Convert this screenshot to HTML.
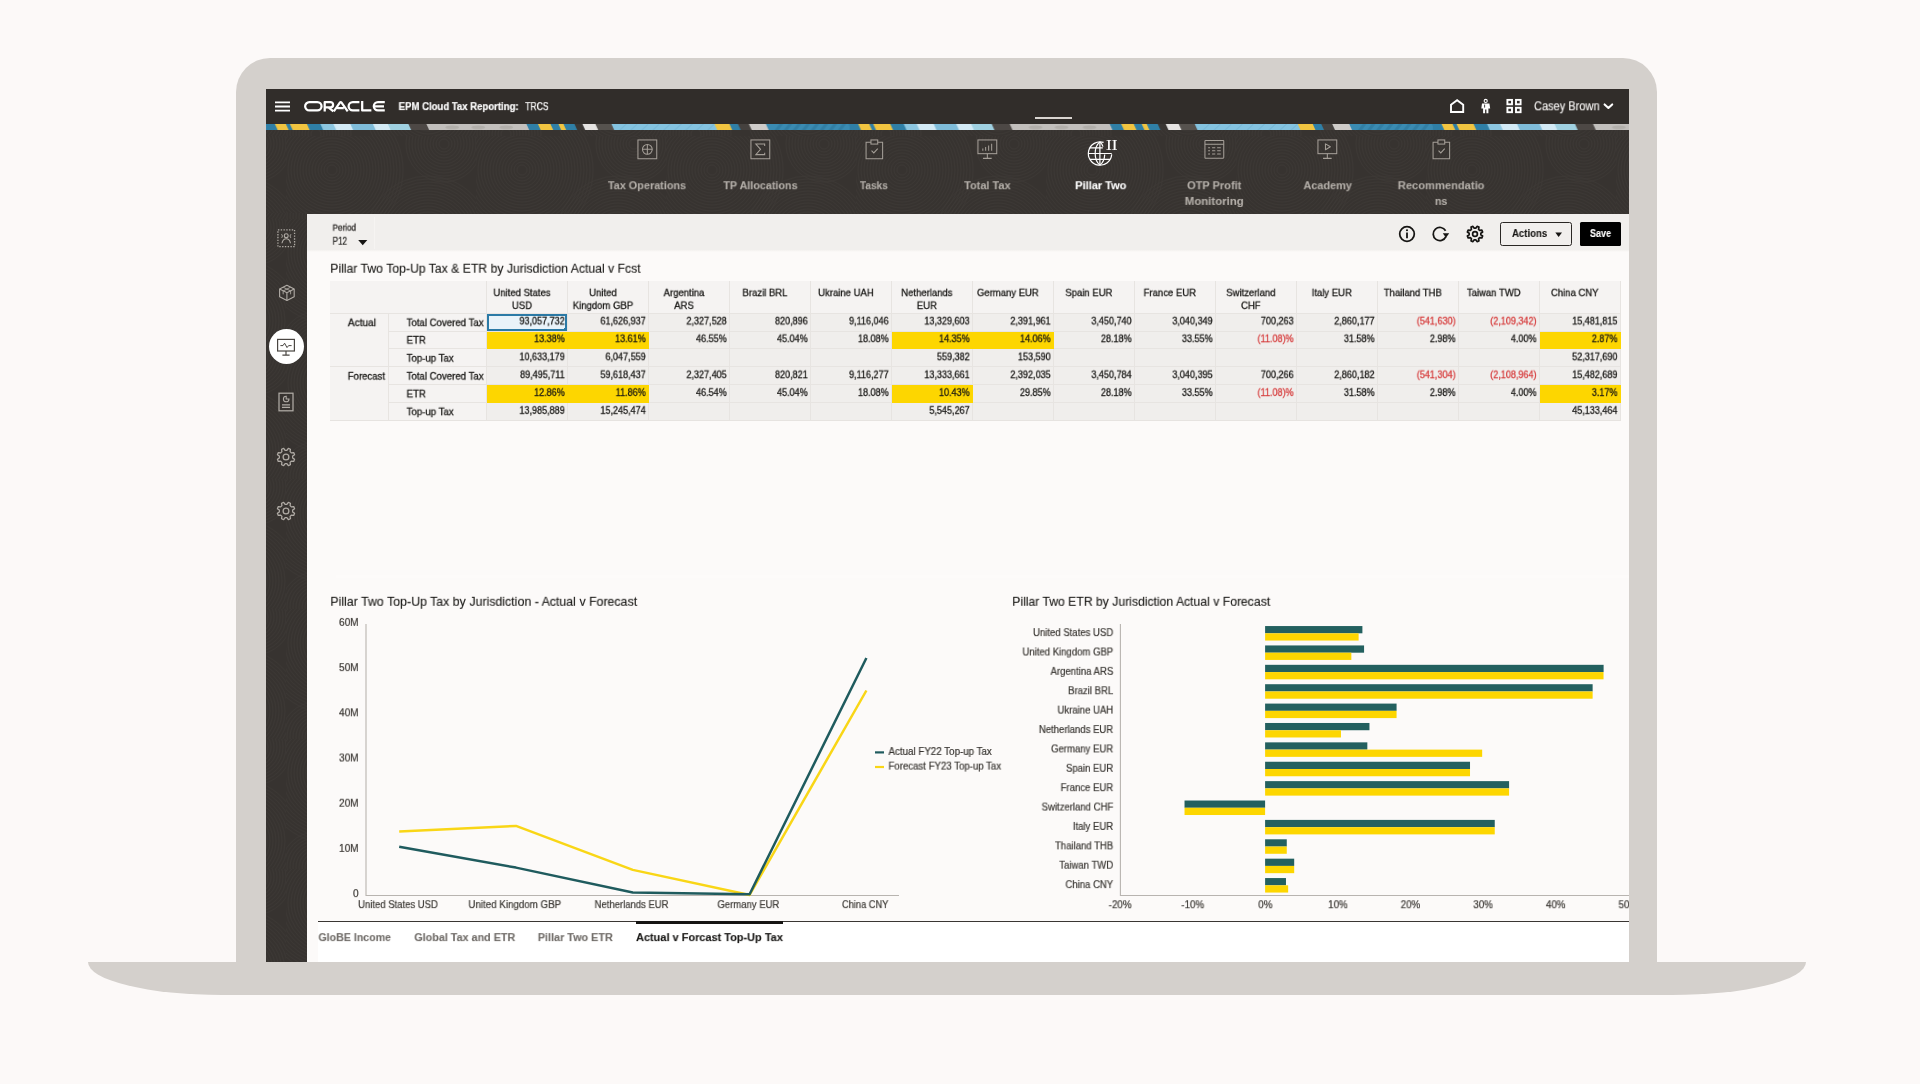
<!DOCTYPE html>
<html lang="en"><head><meta charset="utf-8"><title>EPM Cloud Tax Reporting</title>
<style>
html,body{margin:0;padding:0;}
body{width:1920px;height:1084px;overflow:hidden;background:#fcf9f8;font-family:"Liberation Sans", sans-serif;position:relative;}
.t{position:absolute;white-space:pre;overflow:visible;will-change:transform;}
.r{position:absolute;}
svg{position:absolute;overflow:visible;}
</style></head><body>
<div class="r" style="left:236px;top:58px;width:1421px;height:920px;background:#d4d0cc;border-radius:34px 34px 0 0;"></div><div class="r" style="left:88px;top:962px;width:1718px;height:33px;background:#d4d0cc;border-radius:0 0 134px 134px / 0 0 33px 33px;"></div><div class="r" id="screen" style="left:266px;top:89px;width:1363px;height:873px;overflow:hidden;background:#fcfaf9;"><div class="r" style="left:-266px;top:-89px;width:1920px;height:1084px;"><div class="r" style="left:266px;top:89px;width:1363px;height:35px;background:#312d2a;"></div><svg style="left:274.8px;top:101px" width="15" height="11.4" viewBox="0 0 15 11.4"><path d="M0 1.45H15M0 5.55H15M0 9.65H15" stroke="#fff" stroke-width="1.85" fill="none"/></svg><svg style="left:303.6px;top:101.3px" width="81" height="10.6" viewBox="0 0 81 10.6" fill="none" stroke="#fff" stroke-width="2.25" stroke-linejoin="round">
<rect x="1.12" y="1.12" width="16.4" height="8.36" rx="4.18"/>
<path d="M20.7 10.6V1.12H26.5a2.6 2.6 0 0 1 0 5.2H21.4M24.4 6.4L29.4 10.3"/>
<path d="M29.8 10.3L36 1.4a0.9 0.9 0 0 1 1.4 0L43.7 10.3M33.4 7.2H39.8" stroke-linejoin="miter"/>
<path d="M55.4 1.12H48.8a4.18 4.18 0 0 0 0 8.36H55.4"/>
<path d="M58.2 0V9.48H67.4"/>
<path d="M80.8 1.12H74a4.18 4.18 0 0 0 0 8.36H80.8M70.8 5.3H80"/>
</svg><div class="t" style="left:398px;top:98px;width:137.40px;height:16px;line-height:16px;font-size:10.8px;font-weight:700;color:#ffffff;text-align:left;-webkit-text-stroke:0.2px #ffffff;transform:translate(0.60px,0.10px) scale(0.8863,1.000);transform-origin:0 50%;">EPM Cloud Tax Reporting:</div><div class="t" style="left:525px;top:98px;width:31.40px;height:16px;line-height:16px;font-size:10.8px;font-weight:400;color:#ffffff;text-align:left;-webkit-text-stroke:0.25px #ffffff;transform:translate(0.20px,0.10px) scale(0.7925,1.000);transform-origin:0 50%;">TRCS</div><svg style="left:1449px;top:98px" width="17" height="17" viewBox="0 0 17 17" fill="none" stroke="#fff" stroke-width="1.9" stroke-linejoin="miter">
<path d="M2 6.8L8.1 2.3 14.2 6.8V14H2Z"/></svg><svg style="left:1479px;top:98px" width="14" height="17" viewBox="0 0 14 17" fill="#fff" stroke="none">
<circle cx="6.7" cy="2.9" r="1.55" fill="none" stroke="#fff" stroke-width="1.1"/>
<path d="M3 5.4H10.4L11.2 10.6H9.4V15.3H7.4V11.4H6.1V15.3H4.1V10.6H2.3Z"/>
<path d="M5.6 6.6V9.6" stroke="#312d2a" stroke-width="0.9"/>
</svg><svg style="left:1506px;top:99px" width="16" height="15" viewBox="0 0 16 15" fill="none" stroke="#fff" stroke-width="1.9">
<rect x="1.4" y="0.9" width="4.6" height="4.4"/><rect x="10" y="0.9" width="4.6" height="4.4"/>
<rect x="1.4" y="8.8" width="4.6" height="4.4"/><rect x="10" y="8.8" width="4.6" height="4.4"/></svg><div class="t" style="left:1534px;top:97px;width:73.36px;height:18px;line-height:18px;font-size:12px;font-weight:400;color:#fbf9f8;text-align:left;-webkit-text-stroke:0.1px #fbf9f8;transform:translate(0.00px,0.30px) scale(0.9193,1.000);transform-origin:0 50%;">Casey Brown</div><svg style="left:1603.2px;top:102px" width="11" height="9" viewBox="0 0 11 9" fill="none" stroke="#fff" stroke-width="2.1" stroke-linecap="round" stroke-linejoin="round"><path d="M1.6 2.4L5.4 5.9 9.2 2.4"/></svg><div class="r" style="left:1034.5px;top:117px;width:37.5px;height:2.4000000000000057px;background:#d9d5d1;"></div><svg style="left:266px;top:123.6px" width="1363" height="6.6" viewBox="0 0 1363 6.8" preserveAspectRatio="none"><defs><pattern id="bn" x="0.25" y="0" width="583.3" height="6.8" patternUnits="userSpaceOnUse"><rect x="0" y="0" width="583.3" height="6.8" fill="#2f7fa6"/><polygon points="-1.8,0 9.3,0 12.3,6.8 1.2,6.8" fill="#2f7fa6"/><polygon points="8.7,0 20.3,0 23.3,6.8 11.7,6.8" fill="#f1c440"/><polygon points="19.7,0 24.3,0 27.3,6.8 22.7,6.8" fill="#2f7fa6"/><polygon points="23.7,0 41.3,0 44.3,6.8 26.7,6.8" fill="#f1c440"/><polygon points="40.7,0 54.8,0 57.8,6.8 43.7,6.8" fill="#2f7fa6"/><polygon points="54.2,0 67.8,0 70.8,6.8 57.2,6.8" fill="#8cc6e0"/><polygon points="67.2,0 84.8,0 87.8,6.8 70.2,6.8" fill="#d3eaf5"/><polygon points="84.2,0 107.3,0 110.3,6.8 87.2,6.8" fill="#7fbcd9"/><polygon points="106.7,0 122.3,0 125.3,6.8 109.7,6.8" fill="#d3eaf5"/><polygon points="121.7,0 142.8,0 145.8,6.8 124.7,6.8" fill="#9fd0e0"/><polygon points="142.2,0 160.8,0 163.8,6.8 145.2,6.8" fill="#4d4845"/><polygon points="160.2,0 260.8,0 263.8,6.8 163.2,6.8" fill="#c2bfbc"/><polygon points="260.2,0 272.3,0 275.3,6.8 263.2,6.8" fill="#2f7fa6"/><polygon points="271.7,0 284.8,0 287.8,6.8 274.7,6.8" fill="#f1c440"/><polygon points="284.2,0 292.8,0 295.8,6.8 287.2,6.8" fill="#2f7fa6"/><polygon points="292.2,0 297.8,0 300.8,6.8 295.2,6.8" fill="#f1c440"/><polygon points="297.2,0 308.8,0 311.8,6.8 300.2,6.8" fill="#2f7fa6"/><polygon points="308.2,0 316.8,0 319.8,6.8 311.2,6.8" fill="#3a3633"/><polygon points="316.2,0 329.8,0 332.8,6.8 319.2,6.8" fill="#e6e4e2"/><polygon points="329.2,0 345.8,0 348.8,6.8 332.2,6.8" fill="#56524e"/><polygon points="345.2,0 448.8,0 451.8,6.8 348.2,6.8" fill="#84c3e0"/><polygon points="448.2,0 463.8,0 466.8,6.8 451.2,6.8" fill="#f1c440"/><polygon points="463.2,0 472.3,0 475.3,6.8 466.2,6.8" fill="#2f7fa6"/><polygon points="471.7,0 483.3,0 486.3,6.8 474.7,6.8" fill="#45413e"/><polygon points="482.7,0 500.3,0 503.3,6.8 485.7,6.8" fill="#cfccc9"/><polygon points="499.7,0 582.1,0 585.1,6.8 502.7,6.8" fill="#3a8bb2"/><polygon points="513,0 517,0 512,6.8 508,6.8" fill="#2d7a9f" opacity="0.7"/><polygon points="522,0 526,0 521,6.8 517,6.8" fill="#2d7a9f" opacity="0.7"/><polygon points="531,0 535,0 530,6.8 526,6.8" fill="#2d7a9f" opacity="0.7"/><polygon points="540,0 544,0 539,6.8 535,6.8" fill="#2d7a9f" opacity="0.7"/><polygon points="549,0 553,0 548,6.8 544,6.8" fill="#2d7a9f" opacity="0.7"/><polygon points="558,0 562,0 557,6.8 553,6.8" fill="#2d7a9f" opacity="0.7"/><polygon points="567,0 571,0 566,6.8 562,6.8" fill="#2d7a9f" opacity="0.7"/><polygon points="576,0 580,0 575,6.8 571,6.8" fill="#2d7a9f" opacity="0.7"/><path d="M360 0L353 6.8" stroke="#5fa5c6" stroke-width="0.8" opacity="0.7"/><path d="M371 0L364 6.8" stroke="#5fa5c6" stroke-width="0.8" opacity="0.7"/><path d="M382 0L375 6.8" stroke="#5fa5c6" stroke-width="0.8" opacity="0.7"/><path d="M393 0L386 6.8" stroke="#5fa5c6" stroke-width="0.8" opacity="0.7"/><path d="M404 0L397 6.8" stroke="#5fa5c6" stroke-width="0.8" opacity="0.7"/><path d="M415 0L408 6.8" stroke="#5fa5c6" stroke-width="0.8" opacity="0.7"/><path d="M426 0L419 6.8" stroke="#5fa5c6" stroke-width="0.8" opacity="0.7"/><path d="M437 0L430 6.8" stroke="#5fa5c6" stroke-width="0.8" opacity="0.7"/><path d="M448 0L441 6.8" stroke="#5fa5c6" stroke-width="0.8" opacity="0.7"/><ellipse cx="186" cy="3.4" rx="7" ry="2" fill="#a5a19d" opacity="0.55"/><ellipse cx="212" cy="3.4" rx="7" ry="2" fill="#a5a19d" opacity="0.55"/><ellipse cx="240" cy="3.4" rx="7" ry="2" fill="#a5a19d" opacity="0.55"/></pattern></defs><rect width="1363" height="6.8" fill="url(#bn)"/></svg><svg style="left:266px;top:130px" width="1363" height="84"><defs><pattern id="tx" width="190" height="130" patternUnits="userSpaceOnUse" patternTransform="translate(20 6)">
<g fill="none" stroke="#4a4541" stroke-width="0.75" opacity="0.34"><circle cx="46" cy="34" r="5"/><circle cx="46" cy="34" r="8"/><circle cx="46" cy="34" r="11"/><circle cx="46" cy="34" r="14"/><circle cx="46" cy="34" r="17"/><circle cx="46" cy="34" r="20"/><circle cx="46" cy="34" r="23"/><circle cx="46" cy="34" r="26"/><circle cx="46" cy="34" r="29"/><circle cx="46" cy="34" r="32"/><circle cx="46" cy="34" r="35"/><circle cx="46" cy="34" r="38"/><circle cx="46" cy="34" r="41"/><circle cx="46" cy="34" r="44"/><circle cx="46" cy="34" r="47"/><circle cx="46" cy="34" r="50"/><circle cx="46" cy="34" r="53"/><circle cx="46" cy="34" r="56"/><circle cx="46" cy="34" r="59"/><circle cx="46" cy="34" r="62"/><circle cx="46" cy="34" r="65"/><circle cx="46" cy="34" r="68"/><circle cx="46" cy="34" r="71"/><circle cx="142" cy="102" r="5"/><circle cx="142" cy="102" r="8"/><circle cx="142" cy="102" r="11"/><circle cx="142" cy="102" r="14"/><circle cx="142" cy="102" r="17"/><circle cx="142" cy="102" r="20"/><circle cx="142" cy="102" r="23"/><circle cx="142" cy="102" r="26"/><circle cx="142" cy="102" r="29"/><circle cx="142" cy="102" r="32"/><circle cx="142" cy="102" r="35"/><circle cx="142" cy="102" r="38"/><circle cx="142" cy="102" r="41"/><circle cx="142" cy="102" r="44"/><circle cx="142" cy="102" r="47"/><circle cx="142" cy="102" r="50"/><circle cx="142" cy="102" r="53"/><circle cx="142" cy="102" r="56"/><circle cx="142" cy="102" r="59"/><circle cx="142" cy="102" r="62"/><circle cx="158" cy="8" r="5"/><circle cx="158" cy="8" r="8"/><circle cx="158" cy="8" r="11"/><circle cx="158" cy="8" r="14"/><circle cx="158" cy="8" r="17"/><circle cx="158" cy="8" r="20"/><circle cx="158" cy="8" r="23"/><circle cx="158" cy="8" r="26"/><circle cx="158" cy="8" r="29"/><circle cx="158" cy="8" r="32"/><circle cx="158" cy="8" r="35"/><circle cx="158" cy="8" r="38"/><circle cx="30" cy="128" r="5"/><circle cx="30" cy="128" r="8"/><circle cx="30" cy="128" r="11"/><circle cx="30" cy="128" r="14"/><circle cx="30" cy="128" r="17"/><circle cx="30" cy="128" r="20"/><circle cx="30" cy="128" r="23"/><circle cx="30" cy="128" r="26"/><circle cx="30" cy="128" r="29"/><circle cx="30" cy="128" r="32"/><circle cx="30" cy="128" r="35"/></g></pattern></defs><rect width="1363" height="84" fill="#373330"/><rect width="1363" height="84" fill="url(#tx)"/></svg><svg style="left:266px;top:213px" width="41" height="749"><rect width="41" height="749" fill="#373330"/><rect width="41" height="749" fill="url(#tx)"/></svg><div class="t" style="left:604px;top:177px;width:85.59px;height:16px;line-height:16px;font-size:11.6px;font-weight:700;color:#b3aea8;text-align:center;-webkit-text-stroke:0.1px #b3aea8;transform:translate(0.21px,0.20px) scale(0.9362,1.000);transform-origin:50% 50%;">Tax Operations</div><div class="t" style="left:719px;top:177px;width:81.93px;height:16px;line-height:16px;font-size:11.6px;font-weight:700;color:#b3aea8;text-align:center;-webkit-text-stroke:0.1px #b3aea8;transform:translate(0.49px,0.20px) scale(0.9290,1.000);transform-origin:50% 50%;">TP Allocations</div><div class="t" style="left:856px;top:177px;width:34.03px;height:16px;line-height:16px;font-size:11.6px;font-weight:700;color:#b3aea8;text-align:center;-webkit-text-stroke:0.1px #b3aea8;transform:translate(0.88px,0.20px) scale(0.8742,1.000);transform-origin:50% 50%;">Tasks</div><div class="t" style="left:961px;top:177px;width:51.20px;height:16px;line-height:16px;font-size:11.6px;font-weight:700;color:#b3aea8;text-align:center;-webkit-text-stroke:0.1px #b3aea8;transform:translate(0.75px,0.20px) scale(0.9452,1.000);transform-origin:50% 50%;">Total Tax</div><div class="t" style="left:1072px;top:177px;width:55.93px;height:16px;line-height:16px;font-size:11.6px;font-weight:700;color:#ffffff;text-align:center;-webkit-text-stroke:0.1px #ffffff;transform:translate(0.84px,0.20px) scale(0.9503,1.000);transform-origin:50% 50%;">Pillar Two</div><div class="t" style="left:1300px;top:177px;width:53.58px;height:16px;line-height:16px;font-size:11.6px;font-weight:700;color:#b3aea8;text-align:center;-webkit-text-stroke:0.1px #b3aea8;transform:translate(0.91px,0.20px) scale(0.9402,1.000);transform-origin:50% 50%;">Academy</div><div class="t" style="left:1184px;top:177px;width:59.15px;height:16px;line-height:16px;font-size:11.6px;font-weight:700;color:#b3aea8;text-align:center;-webkit-text-stroke:0.1px #b3aea8;transform:translate(0.68px,0.20px) scale(0.9493,1.000);transform-origin:50% 50%;">OTP Profit</div><div class="t" style="left:1183px;top:192px;width:61.92px;height:16px;line-height:16px;font-size:11.6px;font-weight:700;color:#b3aea8;text-align:center;-webkit-text-stroke:0.1px #b3aea8;transform:translate(0.29px,0.90px) scale(0.9847,1.000);transform-origin:50% 50%;">Monitoring</div><div class="t" style="left:1395px;top:177px;width:92.24px;height:16px;line-height:16px;font-size:11.6px;font-weight:700;color:#b3aea8;text-align:center;-webkit-text-stroke:0.1px #b3aea8;transform:translate(0.03px,0.20px) scale(0.9613,1.000);transform-origin:50% 50%;">Recommendatio</div><div class="t" style="left:1433px;top:192px;width:15.54px;height:16px;line-height:16px;font-size:11.6px;font-weight:700;color:#b3aea8;text-align:center;-webkit-text-stroke:0.1px #b3aea8;transform:translate(0.38px,0.90px) scale(0.9234,1.000);transform-origin:50% 50%;">ns</div><svg style="left:636.65px;top:139.15px" width="20.70" height="20.70" viewBox="0 0 22 22" fill="none" stroke="#a59f98" stroke-width="1.1"><rect x="1" y="1" width="20" height="20"/><circle cx="11" cy="11" r="5.2"/><path d="M11 5.8V16.2M5.8 11H16.2"/></svg><svg style="left:750.10px;top:139.15px" width="20.70" height="20.70" viewBox="0 0 22 22" fill="none" stroke="#a59f98" stroke-width="1.1"><rect x="1" y="1" width="20" height="20"/><path d="M15.6 7.4V5.4H6.2L11.2 11 6.2 16.6H15.6V14.6" stroke-linejoin="miter"/></svg><svg style="left:863.55px;top:139.15px" width="20.70" height="20.70" viewBox="0 0 22 22" fill="none" stroke="#a59f98" stroke-width="1.1"><path d="M7.4 3.4H2.2V21H19.8V3.4H14.6"/><rect x="7.4" y="1" width="7.2" height="4.4"/><path d="M8 12.4L10.4 14.8 14.6 10.2"/></svg><svg style="left:977.00px;top:139.15px" width="20.70" height="20.70" viewBox="0 0 22 22" fill="none" stroke="#a59f98" stroke-width="1.1"><rect x="1" y="1" width="20" height="14.6"/><path d="M11 15.6V20.4M6.4 20.6H15.6"/><path d="M6.2 12.4V10.2M9.2 12.4V8.6M12.4 12.4V7M15.6 12.4V5"/></svg><svg style="left:1087.40px;top:139.4px" width="31" height="27" viewBox="0 0 31 27" fill="none" stroke="#fff" stroke-width="1.2">
<path d="M16.6 3.4A11.7 11.7 0 1 0 24.7 15.4"/>
<path d="M12.9 2.9C6.6 8 6.6 21 12.9 26.1M12.9 2.9C14.4 4.2 15.4 5.8 16 7.6M12.9 26.1C16 23.6 17.6 19.6 17.7 15.4"/>
<path d="M12.9 2.9V26.1M1.2 14.5H24.7M3 8.8H15.8M3 20.3H23.2"/>
</svg><div class="t" style="left:1106px;top:134px;width:20.48px;height:21px;line-height:21px;font-size:15.4px;font-weight:400;color:#fff;text-align:left;font-family:'Liberation Serif', serif;-webkit-text-stroke:0.1px #fff;transform:translate(0.00px,0.20px) scale(1.1200,1.000);transform-origin:0 50%;">II</div><svg style="left:1203.90px;top:139.15px" width="20.70" height="20.70" viewBox="0 0 22 22" fill="none" stroke="#a59f98" stroke-width="1.1"><rect x="1" y="1.6" width="20" height="18.8" rx="0.6"/><path d="M1 5.6H21"/><path d="M4.4 9.2H6.4M8.6 9.2H12M14 9.2H17.8M4.4 12.6H6.4M8.6 12.6H12M14 12.6H17.8M4.4 16H6.4M8.6 16H12M14 16H17.8" stroke-width="1.1"/></svg><svg style="left:1317.35px;top:139.15px" width="20.70" height="20.70" viewBox="0 0 22 22" fill="none" stroke="#a59f98" stroke-width="1.1"><rect x="1" y="1" width="20" height="14.6"/><path d="M11 15.6V20.4M6.4 20.6H15.6"/><path d="M9 5.2V11.4L14.2 8.3Z" stroke-linejoin="round"/></svg><svg style="left:1430.80px;top:139.15px" width="20.70" height="20.70" viewBox="0 0 22 22" fill="none" stroke="#a59f98" stroke-width="1.1"><path d="M7.4 3.4H2.2V21H19.8V3.4H14.6"/><rect x="7.4" y="1" width="7.2" height="4.4"/><path d="M8 12.4L10.4 14.8 14.6 10.2"/></svg><svg style="left:277.15px;top:229.35px" width="18.50" height="18.50" viewBox="0 0 20 20" fill="none" stroke="#b0aba5" stroke-width="1.2"><rect x="1" y="1" width="18" height="18" stroke-dasharray="1.5 1.5" stroke-width="1.4"/><circle cx="10" cy="7.2" r="2.1"/><path d="M5.4 15.4C6.2 11.6 8 10.6 10 10.6S13.8 11.6 14.6 15.4"/><path d="M4.8 5.6C6 6.6 6.2 8.4 5 9.6M15.2 5.6C14 6.6 13.8 8.4 15 9.6" stroke-width="1"/></svg><svg style="left:277.50px;top:284.10px" width="17.80" height="17.80" viewBox="0 0 20 20" fill="none" stroke="#b0aba5" stroke-width="1.25"><path d="M10 1.4L18.2 5.6V14.4L10 18.6 1.8 14.4V5.6Z" stroke-linejoin="round"/><path d="M1.8 5.6L10 9.8 18.2 5.6M10 9.8V18.6"/><path d="M5.8 3.6L14.2 7.8V11.6M14.2 3.6L5.8 7.8V11.6" stroke-width="1"/></svg><div class="r" style="left:268.6px;top:329px;width:35.4px;height:35.4px;border-radius:50%;background:#fff;"></div><svg style="left:276.40px;top:336.70px" width="20.00" height="20.00" viewBox="0 0 20 20" fill="none" stroke="#4a4642" stroke-width="1.2"><rect x="1.6" y="2.4" width="16.8" height="11.6"/><path d="M10 14V18M6.4 18.2H13.6"/><path d="M4.4 8.6H7L8.6 6.2 11 10.6 12.6 8.6H15.6" stroke-width="1"/></svg><svg style="left:276.40px;top:392.30px" width="20.00" height="20.00" viewBox="0 0 20 20" fill="none" stroke="#b0aba5" stroke-width="1.25"><rect x="3" y="1.2" width="14" height="17.6"/><path d="M6 15.4H14M6 12.8H14" stroke-width="1.2"/><path d="M10.2 4.2A2.8 2.8 0 1 0 13 7H10.2Z" stroke-width="1.1"/></svg><svg style="left:276.40px;top:446.70px" width="20.00" height="20.00" viewBox="0 0 20 20" fill="none" stroke="#b0aba5" stroke-width="1.25"><circle cx="10" cy="10" r="2.9"/><path d="M16.64 10.89L18.59 12.31L17.71 14.44L15.32 14.07L14.07 15.32L14.44 17.71L12.31 18.59L10.89 16.64L9.11 16.64L7.69 18.59L5.56 17.71L5.93 15.32L4.68 14.07L2.29 14.44L1.41 12.31L3.36 10.89L3.36 9.11L1.41 7.69L2.29 5.56L4.68 5.93L5.93 4.68L5.56 2.29L7.69 1.41L9.11 3.36L10.89 3.36L12.31 1.41L14.44 2.29L14.07 4.68L15.32 5.93L17.71 5.56L18.59 7.69L16.64 9.11Z" stroke-linejoin="round"/></svg><svg style="left:276.40px;top:500.80px" width="20.00" height="20.00" viewBox="0 0 20 20" fill="none" stroke="#b0aba5" stroke-width="1.25"><circle cx="10" cy="10" r="2.9"/><path d="M16.64 10.89L18.59 12.31L17.71 14.44L15.32 14.07L14.07 15.32L14.44 17.71L12.31 18.59L10.89 16.64L9.11 16.64L7.69 18.59L5.56 17.71L5.93 15.32L4.68 14.07L2.29 14.44L1.41 12.31L3.36 10.89L3.36 9.11L1.41 7.69L2.29 5.56L4.68 5.93L5.93 4.68L5.56 2.29L7.69 1.41L9.11 3.36L10.89 3.36L12.31 1.41L14.44 2.29L14.07 4.68L15.32 5.93L17.71 5.56L18.59 7.69L16.64 9.11Z" stroke-linejoin="round"/></svg><div class="r" style="left:307px;top:214px;width:1322px;height:35.599999999999994px;background:#f1efed;"></div><div class="r" style="left:307px;top:249.6px;width:1322px;height:2px;background:linear-gradient(#f3f1ef,#fcfaf9);"></div><div class="r" style="left:374px;top:217px;width:1px;height:32px;background:#f6f4f2;"></div><div class="t" style="left:332px;top:220px;width:27.15px;height:14px;line-height:14px;font-size:8.7px;font-weight:400;color:#2b2826;text-align:left;-webkit-text-stroke:0.3px #2b2826;transform:translate(0.60px,0.60px) scale(0.9305,1.000);transform-origin:0 50%;">Period</div><div class="t" style="left:332px;top:233px;width:19.79px;height:15px;line-height:15px;font-size:10px;font-weight:400;color:#161513;text-align:left;-webkit-text-stroke:0.15px #161513;transform:translate(0.60px,0.75px) scale(0.8093,1.000);transform-origin:0 50%;">P12</div><svg style="left:358px;top:240.2px" width="10" height="6" viewBox="0 0 10 6"><path d="M0.2 0.1H9.3L4.75 5.2Z" fill="#161513"/></svg><svg style="left:1397.6px;top:224.7px" width="18" height="18" viewBox="0 0 18 18" fill="none" stroke="#161513" stroke-width="1.75">
<circle cx="9" cy="9" r="7.3"/><path d="M9 7.6V13.2" stroke-width="1.8"/><circle cx="9" cy="5.2" r="1.05" fill="#161513" stroke="none"/></svg><svg style="left:1431px;top:224.5px" width="19" height="18" viewBox="0 0 19 18" fill="none" stroke="#161513" stroke-width="1.75">
<path d="M14.9 11.6A6.6 6.6 0 1 1 14.6 5.8"/><path d="M11.8 8.2H18.2L15 12.8Z" fill="#161513" stroke="none"/></svg><svg style="left:1465.7px;top:224.5px" width="18" height="18" viewBox="0 0 18 18" fill="none" stroke="#161513" stroke-width="1.7" stroke-linejoin="round">
<path d="M14.85 9.78L16.63 11.05L15.85 12.94L13.69 12.58L12.58 13.69L12.94 15.85L11.05 16.63L9.78 14.85L8.22 14.85L6.95 16.63L5.06 15.85L5.42 13.69L4.31 12.58L2.15 12.94L1.37 11.05L3.15 9.78L3.15 8.22L1.37 6.95L2.15 5.06L4.31 5.42L5.42 4.31L5.06 2.15L6.95 1.37L8.22 3.15L9.78 3.15L11.05 1.37L12.94 2.15L12.58 4.31L13.69 5.42L15.85 5.06L16.63 6.95L14.85 8.22Z"/><circle cx="9" cy="9" r="2.4"/></svg><div class="r" style="left:1500px;top:221.6px;width:70.4px;height:22.8px;border:1.2px solid #2a2724;border-radius:2.5px;background:#f1efed;"></div><div class="t" style="left:1512px;top:226px;width:39.40px;height:15px;line-height:15px;font-size:10.2px;font-weight:700;color:#161513;text-align:left;-webkit-text-stroke:0.1px #161513;transform:translate(0.00px,0.00px) scale(0.9411,1.000);transform-origin:0 50%;">Actions</div><svg style="left:1554.6px;top:232px" width="8" height="6" viewBox="0 0 8 6"><path d="M0.3 0.4H7L3.65 5Z" fill="#161513"/></svg><div class="r" style="left:1580px;top:222px;width:41.40000000000009px;height:23.599999999999994px;background:#000;border-radius:1.5px;"></div><div class="t" style="left:1590px;top:226px;width:25.82px;height:15px;line-height:15px;font-size:10.2px;font-weight:700;color:#fff;text-align:left;-webkit-text-stroke:0.1px #fff;transform:translate(0.00px,0.00px) scale(0.8815,1.000);transform-origin:0 50%;">Save</div><div class="t" style="left:330px;top:259px;width:322.02px;height:18px;line-height:18px;font-size:12.6px;font-weight:400;color:#161513;text-align:left;-webkit-text-stroke:0.1px #161513;transform:translate(0.20px,0.70px) scale(0.9706,1.000);transform-origin:0 50%;">Pillar Two Top-Up Tax &amp; ETR by Jurisdiction Actual v Fcst</div><div class="r" style="left:329.5px;top:281px;width:1291.2px;height:32px;background:#f5f3f2;"></div><div class="r" style="left:329.5px;top:313px;width:1291.2px;height:107.30000000000001px;background:#f0eeec;"></div><div class="r" style="left:329.5px;top:313px;width:157.39999999999998px;height:107.30000000000001px;background:#f5f3f2;"></div><svg style="left:0;top:0" width="1920" height="1084" shape-rendering="crispEdges"><g stroke="#e7e4e1" stroke-width="1" fill="none"><path d="M329.5 313H1620.7"/><path d="M388.5 331.20H1620.7"/><path d="M388.5 348.70H1620.7"/><path d="M329.5 366.90H1620.7"/><path d="M388.5 384.70H1620.7"/><path d="M388.5 402.50H1620.7"/><path d="M329.5 420.30H1620.7"/><path d="M388.5 313V420.30"/><path d="M486.9 281V420.30"/><path d="M567.88 281V420.30"/><path d="M648.86 281V420.30"/><path d="M729.8399999999999 281V420.30"/><path d="M810.8199999999999 281V420.30"/><path d="M891.8 281V420.30"/><path d="M972.78 281V420.30"/><path d="M1053.76 281V420.30"/><path d="M1134.74 281V420.30"/><path d="M1215.72 281V420.30"/><path d="M1296.7 281V420.30"/><path d="M1377.68 281V420.30"/><path d="M1458.6599999999999 281V420.30"/><path d="M1539.6399999999999 281V420.30"/><path d="M1620.62 281V420.30"/></g></svg><div class="r" style="left:329.5px;top:420.3px;width:1291.2px;height:1.0px;background:#e6e3e0;"></div><div class="t" style="left:489px;top:285px;width:64.44px;height:15px;line-height:15px;font-size:10.4px;font-weight:400;color:#161513;text-align:center;-webkit-text-stroke:0.3px #161513;transform:translate(0.78px,0.38px) scale(0.9150,0.920);transform-origin:50% 50%;">United States</div><div class="t" style="left:510px;top:298px;width:23.96px;height:15px;line-height:15px;font-size:10.4px;font-weight:400;color:#161513;text-align:center;-webkit-text-stroke:0.3px #161513;transform:translate(0.02px,0.18px) scale(0.9150,0.920);transform-origin:50% 50%;">USD</div><div class="t" style="left:586px;top:285px;width:32.06px;height:15px;line-height:15px;font-size:10.4px;font-weight:400;color:#161513;text-align:center;-webkit-text-stroke:0.3px #161513;transform:translate(0.95px,0.38px) scale(0.9150,0.920);transform-origin:50% 50%;">United</div><div class="t" style="left:569px;top:298px;width:67.90px;height:15px;line-height:15px;font-size:10.4px;font-weight:400;color:#161513;text-align:center;-webkit-text-stroke:0.3px #161513;transform:translate(0.03px,0.18px) scale(0.9150,0.920);transform-origin:50% 50%;">Kingdom GBP</div><div class="t" style="left:660px;top:285px;width:46.52px;height:15px;line-height:15px;font-size:10.4px;font-weight:400;color:#161513;text-align:center;-webkit-text-stroke:0.3px #161513;transform:translate(0.70px,0.38px) scale(0.9150,0.920);transform-origin:50% 50%;">Argentina</div><div class="t" style="left:672px;top:298px;width:23.39px;height:15px;line-height:15px;font-size:10.4px;font-weight:400;color:#161513;text-align:center;-webkit-text-stroke:0.3px #161513;transform:translate(0.27px,0.18px) scale(0.9150,0.920);transform-origin:50% 50%;">ARS</div><div class="t" style="left:739px;top:285px;width:51.13px;height:15px;line-height:15px;font-size:10.4px;font-weight:400;color:#161513;text-align:center;-webkit-text-stroke:0.3px #161513;transform:translate(0.38px,0.38px) scale(0.9150,0.920);transform-origin:50% 50%;">Brazil BRL</div><div class="t" style="left:814px;top:285px;width:62.68px;height:15px;line-height:15px;font-size:10.4px;font-weight:400;color:#161513;text-align:center;-webkit-text-stroke:0.3px #161513;transform:translate(0.58px,0.38px) scale(0.9150,0.920);transform-origin:50% 50%;">Ukraine UAH</div><div class="t" style="left:897px;top:285px;width:58.08px;height:15px;line-height:15px;font-size:10.4px;font-weight:400;color:#161513;text-align:center;-webkit-text-stroke:0.3px #161513;transform:translate(0.86px,0.38px) scale(0.9150,0.920);transform-origin:50% 50%;">Netherlands</div><div class="t" style="left:914px;top:298px;width:23.96px;height:15px;line-height:15px;font-size:10.4px;font-weight:400;color:#161513;text-align:center;-webkit-text-stroke:0.3px #161513;transform:translate(0.92px,0.18px) scale(0.9150,0.920);transform-origin:50% 50%;">EUR</div><div class="t" style="left:973px;top:285px;width:69.62px;height:15px;line-height:15px;font-size:10.4px;font-weight:400;color:#161513;text-align:center;-webkit-text-stroke:0.3px #161513;transform:translate(0.07px,0.38px) scale(0.9150,0.920);transform-origin:50% 50%;">Germany EUR</div><div class="t" style="left:1062px;top:285px;width:53.45px;height:15px;line-height:15px;font-size:10.4px;font-weight:400;color:#161513;text-align:center;-webkit-text-stroke:0.3px #161513;transform:translate(0.14px,0.38px) scale(0.9150,0.920);transform-origin:50% 50%;">Spain EUR</div><div class="t" style="left:1140px;top:285px;width:59.22px;height:15px;line-height:15px;font-size:10.4px;font-weight:400;color:#161513;text-align:center;-webkit-text-stroke:0.3px #161513;transform:translate(0.23px,0.38px) scale(0.9150,0.920);transform-origin:50% 50%;">France EUR</div><div class="t" style="left:1222px;top:285px;width:55.76px;height:15px;line-height:15px;font-size:10.4px;font-weight:400;color:#161513;text-align:center;-webkit-text-stroke:0.3px #161513;transform:translate(0.94px,0.38px) scale(0.9150,0.920);transform-origin:50% 50%;">Switzerland</div><div class="t" style="left:1239px;top:298px;width:23.38px;height:15px;line-height:15px;font-size:10.4px;font-weight:400;color:#161513;text-align:center;-webkit-text-stroke:0.3px #161513;transform:translate(0.13px,0.18px) scale(0.9150,0.920);transform-origin:50% 50%;">CHF</div><div class="t" style="left:1308px;top:285px;width:45.92px;height:15px;line-height:15px;font-size:10.4px;font-weight:400;color:#161513;text-align:center;-webkit-text-stroke:0.3px #161513;transform:translate(0.84px,0.38px) scale(0.9150,0.920);transform-origin:50% 50%;">Italy EUR</div><div class="t" style="left:1380px;top:285px;width:65.40px;height:15px;line-height:15px;font-size:10.4px;font-weight:400;color:#161513;text-align:center;-webkit-text-stroke:0.3px #161513;transform:translate(0.08px,0.38px) scale(0.9150,0.920);transform-origin:50% 50%;">Thailand THB</div><div class="t" style="left:1463px;top:285px;width:60.76px;height:15px;line-height:15px;font-size:10.4px;font-weight:400;color:#161513;text-align:center;-webkit-text-stroke:0.3px #161513;transform:translate(0.38px,0.38px) scale(0.9150,0.920);transform-origin:50% 50%;">Taiwan TWD</div><div class="t" style="left:1547px;top:285px;width:54.02px;height:15px;line-height:15px;font-size:10.4px;font-weight:400;color:#161513;text-align:center;-webkit-text-stroke:0.3px #161513;transform:translate(0.73px,0.38px) scale(0.9150,0.920);transform-origin:50% 50%;">China CNY</div><div class="r" style="left:487.4px;top:385.2px;width:80.98000000000002px;height:17.69999999999999px;background:#fdd600;"></div><div class="r" style="left:1540.1399999999999px;top:385.2px;width:80.98000000000002px;height:17.69999999999999px;background:#fdd600;"></div><div class="r" style="left:892.3px;top:331.7px;width:80.98000000000002px;height:17.400000000000034px;background:#fdd600;"></div><div class="r" style="left:568.38px;top:331.7px;width:80.98000000000002px;height:17.400000000000034px;background:#fdd600;"></div><div class="r" style="left:892.3px;top:385.2px;width:80.98000000000002px;height:17.69999999999999px;background:#fdd600;"></div><div class="r" style="left:1540.1399999999999px;top:331.7px;width:80.98000000000002px;height:17.400000000000034px;background:#fdd600;"></div><div class="r" style="left:487.4px;top:331.7px;width:80.98000000000002px;height:17.400000000000034px;background:#fdd600;"></div><div class="r" style="left:973.28px;top:331.7px;width:80.98000000000002px;height:17.400000000000034px;background:#fdd600;"></div><div class="r" style="left:568.38px;top:385.2px;width:80.98000000000002px;height:17.69999999999999px;background:#fdd600;"></div><div class="r" style="left:487.3px;top:313.6px;width:79.6px;height:17.4px;box-sizing:border-box;border:2px solid #2b7aa6;background:#e9f3f9;"></div><div class="r" style="left:564px;top:328px;width:3.3999999999999773px;height:3.3999999999999773px;background:#2b7aa6;"></div><div class="t" style="left:511px;top:313px;width:53.55px;height:15px;line-height:15px;font-size:10.3px;font-weight:400;color:#161513;text-align:right;-webkit-text-stroke:0.3px #161513;transform:translate(0.23px,0.57px) scale(0.8800,0.950);transform-origin:100% 50%;">93,057,732</div><div class="t" style="left:592px;top:313px;width:53.55px;height:15px;line-height:15px;font-size:10.3px;font-weight:400;color:#161513;text-align:right;-webkit-text-stroke:0.3px #161513;transform:translate(0.21px,0.57px) scale(0.8800,0.950);transform-origin:100% 50%;">61,626,937</div><div class="t" style="left:678px;top:313px;width:47.82px;height:15px;line-height:15px;font-size:10.3px;font-weight:400;color:#161513;text-align:right;-webkit-text-stroke:0.3px #161513;transform:translate(0.92px,0.57px) scale(0.8800,0.950);transform-origin:100% 50%;">2,327,528</div><div class="t" style="left:768px;top:313px;width:39.23px;height:15px;line-height:15px;font-size:10.3px;font-weight:400;color:#161513;text-align:right;-webkit-text-stroke:0.3px #161513;transform:translate(0.49px,0.57px) scale(0.8800,0.950);transform-origin:100% 50%;">820,896</div><div class="t" style="left:841px;top:313px;width:47.06px;height:15px;line-height:15px;font-size:10.3px;font-weight:400;color:#161513;text-align:right;-webkit-text-stroke:0.3px #161513;transform:translate(0.64px,0.57px) scale(0.8800,0.950);transform-origin:100% 50%;">9,116,046</div><div class="t" style="left:916px;top:313px;width:53.55px;height:15px;line-height:15px;font-size:10.3px;font-weight:400;color:#161513;text-align:right;-webkit-text-stroke:0.3px #161513;transform:translate(0.13px,0.57px) scale(0.8800,0.950);transform-origin:100% 50%;">13,329,603</div><div class="t" style="left:1002px;top:313px;width:47.82px;height:15px;line-height:15px;font-size:10.3px;font-weight:400;color:#161513;text-align:right;-webkit-text-stroke:0.3px #161513;transform:translate(0.84px,0.57px) scale(0.8800,0.950);transform-origin:100% 50%;">2,391,961</div><div class="t" style="left:1083px;top:313px;width:47.82px;height:15px;line-height:15px;font-size:10.3px;font-weight:400;color:#161513;text-align:right;-webkit-text-stroke:0.3px #161513;transform:translate(0.82px,0.57px) scale(0.8800,0.950);transform-origin:100% 50%;">3,450,740</div><div class="t" style="left:1164px;top:313px;width:47.82px;height:15px;line-height:15px;font-size:10.3px;font-weight:400;color:#161513;text-align:right;-webkit-text-stroke:0.3px #161513;transform:translate(0.80px,0.57px) scale(0.8800,0.950);transform-origin:100% 50%;">3,040,349</div><div class="t" style="left:1254px;top:313px;width:39.23px;height:15px;line-height:15px;font-size:10.3px;font-weight:400;color:#161513;text-align:right;-webkit-text-stroke:0.3px #161513;transform:translate(0.37px,0.57px) scale(0.8800,0.950);transform-origin:100% 50%;">700,263</div><div class="t" style="left:1326px;top:313px;width:47.82px;height:15px;line-height:15px;font-size:10.3px;font-weight:400;color:#161513;text-align:right;-webkit-text-stroke:0.3px #161513;transform:translate(0.76px,0.57px) scale(0.8800,0.950);transform-origin:100% 50%;">2,860,177</div><div class="t" style="left:1409px;top:313px;width:46.09px;height:15px;line-height:15px;font-size:10.3px;font-weight:400;color:#d63b3b;text-align:right;-webkit-text-stroke:0.3px #d63b3b;transform:translate(0.47px,0.57px) scale(0.8800,0.950);transform-origin:100% 50%;">(541,630)</div><div class="t" style="left:1481px;top:313px;width:54.68px;height:15px;line-height:15px;font-size:10.3px;font-weight:400;color:#d63b3b;text-align:right;-webkit-text-stroke:0.3px #d63b3b;transform:translate(0.86px,0.57px) scale(0.8800,0.950);transform-origin:100% 50%;">(2,109,342)</div><div class="t" style="left:1563px;top:313px;width:53.55px;height:15px;line-height:15px;font-size:10.3px;font-weight:400;color:#161513;text-align:right;-webkit-text-stroke:0.3px #161513;transform:translate(0.97px,0.57px) scale(0.8800,0.950);transform-origin:100% 50%;">15,481,815</div><div class="t" style="left:527px;top:331px;width:36.93px;height:15px;line-height:15px;font-size:10.3px;font-weight:400;color:#161513;text-align:right;-webkit-text-stroke:0.3px #161513;transform:translate(0.85px,0.28px) scale(0.8800,0.950);transform-origin:100% 50%;">13.38%</div><div class="t" style="left:608px;top:331px;width:36.93px;height:15px;line-height:15px;font-size:10.3px;font-weight:400;color:#161513;text-align:right;-webkit-text-stroke:0.3px #161513;transform:translate(0.83px,0.28px) scale(0.8800,0.950);transform-origin:100% 50%;">13.61%</div><div class="t" style="left:689px;top:331px;width:36.93px;height:15px;line-height:15px;font-size:10.3px;font-weight:400;color:#161513;text-align:right;-webkit-text-stroke:0.3px #161513;transform:translate(0.81px,0.28px) scale(0.8800,0.950);transform-origin:100% 50%;">46.55%</div><div class="t" style="left:770px;top:331px;width:36.93px;height:15px;line-height:15px;font-size:10.3px;font-weight:400;color:#161513;text-align:right;-webkit-text-stroke:0.3px #161513;transform:translate(0.79px,0.28px) scale(0.8800,0.950);transform-origin:100% 50%;">45.04%</div><div class="t" style="left:851px;top:331px;width:36.93px;height:15px;line-height:15px;font-size:10.3px;font-weight:400;color:#161513;text-align:right;-webkit-text-stroke:0.3px #161513;transform:translate(0.77px,0.28px) scale(0.8800,0.950);transform-origin:100% 50%;">18.08%</div><div class="t" style="left:932px;top:331px;width:36.93px;height:15px;line-height:15px;font-size:10.3px;font-weight:400;color:#161513;text-align:right;-webkit-text-stroke:0.3px #161513;transform:translate(0.75px,0.28px) scale(0.8800,0.950);transform-origin:100% 50%;">14.35%</div><div class="t" style="left:1013px;top:331px;width:36.93px;height:15px;line-height:15px;font-size:10.3px;font-weight:400;color:#161513;text-align:right;-webkit-text-stroke:0.3px #161513;transform:translate(0.73px,0.28px) scale(0.8800,0.950);transform-origin:100% 50%;">14.06%</div><div class="t" style="left:1094px;top:331px;width:36.93px;height:15px;line-height:15px;font-size:10.3px;font-weight:400;color:#161513;text-align:right;-webkit-text-stroke:0.3px #161513;transform:translate(0.71px,0.28px) scale(0.8800,0.950);transform-origin:100% 50%;">28.18%</div><div class="t" style="left:1175px;top:331px;width:36.93px;height:15px;line-height:15px;font-size:10.3px;font-weight:400;color:#161513;text-align:right;-webkit-text-stroke:0.3px #161513;transform:translate(0.69px,0.28px) scale(0.8800,0.950);transform-origin:100% 50%;">33.55%</div><div class="t" style="left:1250px;top:331px;width:43.03px;height:15px;line-height:15px;font-size:10.3px;font-weight:400;color:#d63b3b;text-align:right;-webkit-text-stroke:0.3px #d63b3b;transform:translate(0.57px,0.28px) scale(0.8800,0.950);transform-origin:100% 50%;">(11.08)%</div><div class="t" style="left:1337px;top:331px;width:36.93px;height:15px;line-height:15px;font-size:10.3px;font-weight:400;color:#161513;text-align:right;-webkit-text-stroke:0.3px #161513;transform:translate(0.65px,0.28px) scale(0.8800,0.950);transform-origin:100% 50%;">31.58%</div><div class="t" style="left:1424px;top:331px;width:31.21px;height:15px;line-height:15px;font-size:10.3px;font-weight:400;color:#161513;text-align:right;-webkit-text-stroke:0.3px #161513;transform:translate(0.35px,0.28px) scale(0.8800,0.950);transform-origin:100% 50%;">2.98%</div><div class="t" style="left:1505px;top:331px;width:31.21px;height:15px;line-height:15px;font-size:10.3px;font-weight:400;color:#161513;text-align:right;-webkit-text-stroke:0.3px #161513;transform:translate(0.33px,0.28px) scale(0.8800,0.950);transform-origin:100% 50%;">4.00%</div><div class="t" style="left:1586px;top:331px;width:31.21px;height:15px;line-height:15px;font-size:10.3px;font-weight:400;color:#161513;text-align:right;-webkit-text-stroke:0.3px #161513;transform:translate(0.31px,0.28px) scale(0.8800,0.950);transform-origin:100% 50%;">2.87%</div><div class="t" style="left:511px;top:349px;width:53.55px;height:15px;line-height:15px;font-size:10.3px;font-weight:400;color:#161513;text-align:right;-webkit-text-stroke:0.3px #161513;transform:translate(0.23px,0.38px) scale(0.8800,0.950);transform-origin:100% 50%;">10,633,179</div><div class="t" style="left:597px;top:349px;width:47.82px;height:15px;line-height:15px;font-size:10.3px;font-weight:400;color:#161513;text-align:right;-webkit-text-stroke:0.3px #161513;transform:translate(0.94px,0.38px) scale(0.8800,0.950);transform-origin:100% 50%;">6,047,559</div><div class="t" style="left:930px;top:349px;width:39.23px;height:15px;line-height:15px;font-size:10.3px;font-weight:400;color:#161513;text-align:right;-webkit-text-stroke:0.3px #161513;transform:translate(0.45px,0.38px) scale(0.8800,0.950);transform-origin:100% 50%;">559,382</div><div class="t" style="left:1011px;top:349px;width:39.23px;height:15px;line-height:15px;font-size:10.3px;font-weight:400;color:#161513;text-align:right;-webkit-text-stroke:0.3px #161513;transform:translate(0.43px,0.38px) scale(0.8800,0.950);transform-origin:100% 50%;">153,590</div><div class="t" style="left:1563px;top:349px;width:53.55px;height:15px;line-height:15px;font-size:10.3px;font-weight:400;color:#161513;text-align:right;-webkit-text-stroke:0.3px #161513;transform:translate(0.97px,0.38px) scale(0.8800,0.950);transform-origin:100% 50%;">52,317,690</div><div class="t" style="left:511px;top:367px;width:52.79px;height:15px;line-height:15px;font-size:10.3px;font-weight:400;color:#161513;text-align:right;-webkit-text-stroke:0.3px #161513;transform:translate(0.99px,0.28px) scale(0.8800,0.950);transform-origin:100% 50%;">89,495,711</div><div class="t" style="left:592px;top:367px;width:53.55px;height:15px;line-height:15px;font-size:10.3px;font-weight:400;color:#161513;text-align:right;-webkit-text-stroke:0.3px #161513;transform:translate(0.21px,0.28px) scale(0.8800,0.950);transform-origin:100% 50%;">59,618,437</div><div class="t" style="left:678px;top:367px;width:47.82px;height:15px;line-height:15px;font-size:10.3px;font-weight:400;color:#161513;text-align:right;-webkit-text-stroke:0.3px #161513;transform:translate(0.92px,0.28px) scale(0.8800,0.950);transform-origin:100% 50%;">2,327,405</div><div class="t" style="left:768px;top:367px;width:39.23px;height:15px;line-height:15px;font-size:10.3px;font-weight:400;color:#161513;text-align:right;-webkit-text-stroke:0.3px #161513;transform:translate(0.49px,0.28px) scale(0.8800,0.950);transform-origin:100% 50%;">820,821</div><div class="t" style="left:841px;top:367px;width:47.06px;height:15px;line-height:15px;font-size:10.3px;font-weight:400;color:#161513;text-align:right;-webkit-text-stroke:0.3px #161513;transform:translate(0.64px,0.28px) scale(0.8800,0.950);transform-origin:100% 50%;">9,116,277</div><div class="t" style="left:916px;top:367px;width:53.55px;height:15px;line-height:15px;font-size:10.3px;font-weight:400;color:#161513;text-align:right;-webkit-text-stroke:0.3px #161513;transform:translate(0.13px,0.28px) scale(0.8800,0.950);transform-origin:100% 50%;">13,333,661</div><div class="t" style="left:1002px;top:367px;width:47.82px;height:15px;line-height:15px;font-size:10.3px;font-weight:400;color:#161513;text-align:right;-webkit-text-stroke:0.3px #161513;transform:translate(0.84px,0.28px) scale(0.8800,0.950);transform-origin:100% 50%;">2,392,035</div><div class="t" style="left:1083px;top:367px;width:47.82px;height:15px;line-height:15px;font-size:10.3px;font-weight:400;color:#161513;text-align:right;-webkit-text-stroke:0.3px #161513;transform:translate(0.82px,0.28px) scale(0.8800,0.950);transform-origin:100% 50%;">3,450,784</div><div class="t" style="left:1164px;top:367px;width:47.82px;height:15px;line-height:15px;font-size:10.3px;font-weight:400;color:#161513;text-align:right;-webkit-text-stroke:0.3px #161513;transform:translate(0.80px,0.28px) scale(0.8800,0.950);transform-origin:100% 50%;">3,040,395</div><div class="t" style="left:1254px;top:367px;width:39.23px;height:15px;line-height:15px;font-size:10.3px;font-weight:400;color:#161513;text-align:right;-webkit-text-stroke:0.3px #161513;transform:translate(0.37px,0.28px) scale(0.8800,0.950);transform-origin:100% 50%;">700,266</div><div class="t" style="left:1326px;top:367px;width:47.82px;height:15px;line-height:15px;font-size:10.3px;font-weight:400;color:#161513;text-align:right;-webkit-text-stroke:0.3px #161513;transform:translate(0.76px,0.28px) scale(0.8800,0.950);transform-origin:100% 50%;">2,860,182</div><div class="t" style="left:1409px;top:367px;width:46.09px;height:15px;line-height:15px;font-size:10.3px;font-weight:400;color:#d63b3b;text-align:right;-webkit-text-stroke:0.3px #d63b3b;transform:translate(0.47px,0.28px) scale(0.8800,0.950);transform-origin:100% 50%;">(541,304)</div><div class="t" style="left:1481px;top:367px;width:54.68px;height:15px;line-height:15px;font-size:10.3px;font-weight:400;color:#d63b3b;text-align:right;-webkit-text-stroke:0.3px #d63b3b;transform:translate(0.86px,0.28px) scale(0.8800,0.950);transform-origin:100% 50%;">(2,108,964)</div><div class="t" style="left:1563px;top:367px;width:53.55px;height:15px;line-height:15px;font-size:10.3px;font-weight:400;color:#161513;text-align:right;-webkit-text-stroke:0.3px #161513;transform:translate(0.97px,0.28px) scale(0.8800,0.950);transform-origin:100% 50%;">15,482,689</div><div class="t" style="left:527px;top:385px;width:36.93px;height:15px;line-height:15px;font-size:10.3px;font-weight:400;color:#161513;text-align:right;-webkit-text-stroke:0.3px #161513;transform:translate(0.85px,0.07px) scale(0.8800,0.950);transform-origin:100% 50%;">12.86%</div><div class="t" style="left:609px;top:385px;width:36.17px;height:15px;line-height:15px;font-size:10.3px;font-weight:400;color:#161513;text-align:right;-webkit-text-stroke:0.3px #161513;transform:translate(0.59px,0.07px) scale(0.8800,0.950);transform-origin:100% 50%;">11.86%</div><div class="t" style="left:689px;top:385px;width:36.93px;height:15px;line-height:15px;font-size:10.3px;font-weight:400;color:#161513;text-align:right;-webkit-text-stroke:0.3px #161513;transform:translate(0.81px,0.07px) scale(0.8800,0.950);transform-origin:100% 50%;">46.54%</div><div class="t" style="left:770px;top:385px;width:36.93px;height:15px;line-height:15px;font-size:10.3px;font-weight:400;color:#161513;text-align:right;-webkit-text-stroke:0.3px #161513;transform:translate(0.79px,0.07px) scale(0.8800,0.950);transform-origin:100% 50%;">45.04%</div><div class="t" style="left:851px;top:385px;width:36.93px;height:15px;line-height:15px;font-size:10.3px;font-weight:400;color:#161513;text-align:right;-webkit-text-stroke:0.3px #161513;transform:translate(0.77px,0.07px) scale(0.8800,0.950);transform-origin:100% 50%;">18.08%</div><div class="t" style="left:932px;top:385px;width:36.93px;height:15px;line-height:15px;font-size:10.3px;font-weight:400;color:#161513;text-align:right;-webkit-text-stroke:0.3px #161513;transform:translate(0.75px,0.07px) scale(0.8800,0.950);transform-origin:100% 50%;">10.43%</div><div class="t" style="left:1013px;top:385px;width:36.93px;height:15px;line-height:15px;font-size:10.3px;font-weight:400;color:#161513;text-align:right;-webkit-text-stroke:0.3px #161513;transform:translate(0.73px,0.07px) scale(0.8800,0.950);transform-origin:100% 50%;">29.85%</div><div class="t" style="left:1094px;top:385px;width:36.93px;height:15px;line-height:15px;font-size:10.3px;font-weight:400;color:#161513;text-align:right;-webkit-text-stroke:0.3px #161513;transform:translate(0.71px,0.07px) scale(0.8800,0.950);transform-origin:100% 50%;">28.18%</div><div class="t" style="left:1175px;top:385px;width:36.93px;height:15px;line-height:15px;font-size:10.3px;font-weight:400;color:#161513;text-align:right;-webkit-text-stroke:0.3px #161513;transform:translate(0.69px,0.07px) scale(0.8800,0.950);transform-origin:100% 50%;">33.55%</div><div class="t" style="left:1250px;top:385px;width:43.03px;height:15px;line-height:15px;font-size:10.3px;font-weight:400;color:#d63b3b;text-align:right;-webkit-text-stroke:0.3px #d63b3b;transform:translate(0.57px,0.07px) scale(0.8800,0.950);transform-origin:100% 50%;">(11.08)%</div><div class="t" style="left:1337px;top:385px;width:36.93px;height:15px;line-height:15px;font-size:10.3px;font-weight:400;color:#161513;text-align:right;-webkit-text-stroke:0.3px #161513;transform:translate(0.65px,0.07px) scale(0.8800,0.950);transform-origin:100% 50%;">31.58%</div><div class="t" style="left:1424px;top:385px;width:31.21px;height:15px;line-height:15px;font-size:10.3px;font-weight:400;color:#161513;text-align:right;-webkit-text-stroke:0.3px #161513;transform:translate(0.35px,0.07px) scale(0.8800,0.950);transform-origin:100% 50%;">2.98%</div><div class="t" style="left:1505px;top:385px;width:31.21px;height:15px;line-height:15px;font-size:10.3px;font-weight:400;color:#161513;text-align:right;-webkit-text-stroke:0.3px #161513;transform:translate(0.33px,0.07px) scale(0.8800,0.950);transform-origin:100% 50%;">4.00%</div><div class="t" style="left:1586px;top:385px;width:31.21px;height:15px;line-height:15px;font-size:10.3px;font-weight:400;color:#161513;text-align:right;-webkit-text-stroke:0.3px #161513;transform:translate(0.31px,0.07px) scale(0.8800,0.950);transform-origin:100% 50%;">3.17%</div><div class="t" style="left:511px;top:402px;width:53.55px;height:15px;line-height:15px;font-size:10.3px;font-weight:400;color:#161513;text-align:right;-webkit-text-stroke:0.3px #161513;transform:translate(0.23px,0.98px) scale(0.8800,0.950);transform-origin:100% 50%;">13,985,889</div><div class="t" style="left:592px;top:402px;width:53.55px;height:15px;line-height:15px;font-size:10.3px;font-weight:400;color:#161513;text-align:right;-webkit-text-stroke:0.3px #161513;transform:translate(0.21px,0.98px) scale(0.8800,0.950);transform-origin:100% 50%;">15,245,474</div><div class="t" style="left:921px;top:402px;width:47.82px;height:15px;line-height:15px;font-size:10.3px;font-weight:400;color:#161513;text-align:right;-webkit-text-stroke:0.3px #161513;transform:translate(0.86px,0.98px) scale(0.8800,0.950);transform-origin:100% 50%;">5,545,267</div><div class="t" style="left:1563px;top:402px;width:53.55px;height:15px;line-height:15px;font-size:10.3px;font-weight:400;color:#161513;text-align:right;-webkit-text-stroke:0.3px #161513;transform:translate(0.97px,0.98px) scale(0.8800,0.950);transform-origin:100% 50%;">45,133,464</div><div class="t" style="left:406px;top:315px;width:85.05px;height:15px;line-height:15px;font-size:10.4px;font-weight:400;color:#161513;text-align:left;-webkit-text-stroke:0.3px #161513;transform:translate(0.60px,0.31px) scale(0.9280,0.940);transform-origin:0 50%;">Total Covered Tax</div><div class="t" style="left:406px;top:332px;width:22.80px;height:15px;line-height:15px;font-size:10.4px;font-weight:400;color:#161513;text-align:left;-webkit-text-stroke:0.3px #161513;transform:translate(0.60px,0.71px) scale(0.9280,0.940);transform-origin:0 50%;">ETR</div><div class="t" style="left:406px;top:350px;width:52.69px;height:15px;line-height:15px;font-size:10.4px;font-weight:400;color:#161513;text-align:left;-webkit-text-stroke:0.3px #161513;transform:translate(0.60px,0.81px) scale(0.9280,0.940);transform-origin:0 50%;">Top-up Tax</div><div class="t" style="left:406px;top:368px;width:85.05px;height:15px;line-height:15px;font-size:10.4px;font-weight:400;color:#161513;text-align:left;-webkit-text-stroke:0.3px #161513;transform:translate(0.60px,0.81px) scale(0.9280,0.940);transform-origin:0 50%;">Total Covered Tax</div><div class="t" style="left:406px;top:386px;width:22.80px;height:15px;line-height:15px;font-size:10.4px;font-weight:400;color:#161513;text-align:left;-webkit-text-stroke:0.3px #161513;transform:translate(0.60px,0.51px) scale(0.9280,0.940);transform-origin:0 50%;">ETR</div><div class="t" style="left:406px;top:404px;width:52.69px;height:15px;line-height:15px;font-size:10.4px;font-weight:400;color:#161513;text-align:left;-webkit-text-stroke:0.3px #161513;transform:translate(0.60px,0.41px) scale(0.9280,0.940);transform-origin:0 50%;">Top-up Tax</div><div class="t" style="left:347px;top:315px;width:30.91px;height:15px;line-height:15px;font-size:10.4px;font-weight:400;color:#161513;text-align:left;-webkit-text-stroke:0.3px #161513;transform:translate(0.80px,0.31px) scale(0.9756,0.940);transform-origin:0 50%;">Actual</div><div class="t" style="left:347px;top:368px;width:42.46px;height:15px;line-height:15px;font-size:10.4px;font-weight:400;color:#161513;text-align:left;-webkit-text-stroke:0.3px #161513;transform:translate(0.80px,0.81px) scale(0.9195,0.940);transform-origin:0 50%;">Forecast</div><div class="r" style="left:336px;top:575px;width:1293px;height:3px;background:#fdfbfa;"></div><div class="t" style="left:330px;top:592px;width:314.33px;height:18px;line-height:18px;font-size:12.6px;font-weight:400;color:#161513;text-align:left;-webkit-text-stroke:0.1px #161513;transform:translate(0.30px,0.81px) scale(0.9829,1.000);transform-origin:0 50%;">Pillar Two Top-Up Tax by Jurisdiction - Actual v Forecast</div><svg style="left:0;top:0" width="1920" height="1084">
<path d="M366 624V895.5H899" fill="none" stroke="#b8b4b0" stroke-width="1.1"/>
<polyline points="399.2,831.6 516.0,825.9 632.8,869.9 749.6,895.0 866.4,690.5" fill="none" stroke="#f9d616" stroke-width="2.5" stroke-linejoin="round" stroke-linecap="butt"/>
<polyline points="399.2,846.8 516.0,867.6 632.8,892.5 749.6,894.3 866.4,658.0" fill="none" stroke="#1f5b5e" stroke-width="2.5" stroke-linejoin="round" stroke-linecap="butt"/>
<path d="M875 752.4H884" stroke="#1f5b5e" stroke-width="2.2"/><path d="M875 767H884" stroke="#f9d616" stroke-width="2.2"/>
</svg><div class="t" style="left:350px;top:886px;width:7.67px;height:15px;line-height:15px;font-size:10.2px;font-weight:400;color:#36332f;text-align:right;-webkit-text-stroke:0.18px #36332f;transform:translate(0.93px,0.10px) scale(0.9900,1.000);transform-origin:100% 50%;">0</div><div class="t" style="left:336px;top:840px;width:21.84px;height:15px;line-height:15px;font-size:10.2px;font-weight:400;color:#36332f;text-align:right;-webkit-text-stroke:0.18px #36332f;transform:translate(0.76px,0.90px) scale(0.9900,1.000);transform-origin:100% 50%;">10M</div><div class="t" style="left:336px;top:795px;width:21.84px;height:15px;line-height:15px;font-size:10.2px;font-weight:400;color:#36332f;text-align:right;-webkit-text-stroke:0.18px #36332f;transform:translate(0.76px,0.70px) scale(0.9900,1.000);transform-origin:100% 50%;">20M</div><div class="t" style="left:336px;top:750px;width:21.84px;height:15px;line-height:15px;font-size:10.2px;font-weight:400;color:#36332f;text-align:right;-webkit-text-stroke:0.18px #36332f;transform:translate(0.76px,0.50px) scale(0.9900,1.000);transform-origin:100% 50%;">30M</div><div class="t" style="left:336px;top:705px;width:21.84px;height:15px;line-height:15px;font-size:10.2px;font-weight:400;color:#36332f;text-align:right;-webkit-text-stroke:0.18px #36332f;transform:translate(0.76px,0.30px) scale(0.9900,1.000);transform-origin:100% 50%;">40M</div><div class="t" style="left:336px;top:660px;width:21.84px;height:15px;line-height:15px;font-size:10.2px;font-weight:400;color:#36332f;text-align:right;-webkit-text-stroke:0.18px #36332f;transform:translate(0.76px,0.10px) scale(0.9900,1.000);transform-origin:100% 50%;">50M</div><div class="t" style="left:336px;top:614px;width:21.84px;height:15px;line-height:15px;font-size:10.2px;font-weight:400;color:#36332f;text-align:right;-webkit-text-stroke:0.18px #36332f;transform:translate(0.76px,0.90px) scale(0.9900,1.000);transform-origin:100% 50%;">60M</div><div class="t" style="left:353px;top:897px;width:89.28px;height:15px;line-height:15px;font-size:10.4px;font-weight:400;color:#36332f;text-align:center;-webkit-text-stroke:0.18px #36332f;transform:translate(0.36px,0.10px) scale(0.9131,1.000);transform-origin:50% 50%;">United States USD</div><div class="t" style="left:464px;top:897px;width:100.85px;height:15px;line-height:15px;font-size:10.4px;font-weight:400;color:#36332f;text-align:center;-webkit-text-stroke:0.18px #36332f;transform:translate(0.37px,0.10px) scale(0.9388,1.000);transform-origin:50% 50%;">United Kingdom GBP</div><div class="t" style="left:590px;top:897px;width:82.92px;height:15px;line-height:15px;font-size:10.4px;font-weight:400;color:#36332f;text-align:center;-webkit-text-stroke:0.18px #36332f;transform:translate(0.14px,0.10px) scale(0.9144,1.000);transform-origin:50% 50%;">Netherlands EUR</div><div class="t" style="left:713px;top:897px;width:69.62px;height:15px;line-height:15px;font-size:10.4px;font-weight:400;color:#36332f;text-align:center;-webkit-text-stroke:0.18px #36332f;transform:translate(0.59px,0.10px) scale(0.9169,1.000);transform-origin:50% 50%;">Germany EUR</div><div class="t" style="left:838px;top:897px;width:54.02px;height:15px;line-height:15px;font-size:10.4px;font-weight:400;color:#36332f;text-align:center;-webkit-text-stroke:0.18px #36332f;transform:translate(0.19px,0.10px) scale(0.8939,1.000);transform-origin:50% 50%;">China CNY</div><div class="t" style="left:888px;top:743px;width:107.81px;height:15px;line-height:15px;font-size:10px;font-weight:400;color:#36332f;text-align:left;-webkit-text-stroke:0.18px #36332f;transform:translate(0.50px,0.98px) scale(0.9763,1.000);transform-origin:0 50%;">Actual FY22 Top-up Tax</div><div class="t" style="left:888px;top:758px;width:118.91px;height:15px;line-height:15px;font-size:10px;font-weight:400;color:#36332f;text-align:left;-webkit-text-stroke:0.18px #36332f;transform:translate(0.50px,0.58px) scale(0.9631,1.000);transform-origin:0 50%;">Forecast FY23 Top-up Tax</div><div class="t" style="left:1012px;top:592px;width:268.56px;height:18px;line-height:18px;font-size:12.6px;font-weight:400;color:#161513;text-align:left;-webkit-text-stroke:0.1px #161513;transform:translate(0.20px,0.81px) scale(0.9679,1.000);transform-origin:0 50%;">Pillar Two ETR by Jurisdiction Actual v Forecast</div><svg style="left:0;top:0" width="1920" height="1084"><path d="M1120.4 624V895.5H1629" fill="none" stroke="#b8b4b0" stroke-width="1.1"/><rect x="1265.10" y="626.05" width="97.30" height="7.25" fill="#23605f"/><rect x="1265.10" y="633.30" width="93.52" height="7.25" fill="#fdd600"/><rect x="1265.10" y="645.44" width="98.97" height="7.25" fill="#23605f"/><rect x="1265.10" y="652.69" width="86.25" height="7.25" fill="#fdd600"/><rect x="1265.10" y="664.82" width="338.51" height="7.25" fill="#23605f"/><rect x="1265.10" y="672.07" width="338.44" height="7.25" fill="#fdd600"/><rect x="1265.10" y="684.21" width="327.53" height="7.25" fill="#23605f"/><rect x="1265.10" y="691.46" width="327.53" height="7.25" fill="#fdd600"/><rect x="1265.10" y="703.59" width="131.48" height="7.25" fill="#23605f"/><rect x="1265.10" y="710.84" width="131.48" height="7.25" fill="#fdd600"/><rect x="1265.10" y="722.98" width="104.35" height="7.25" fill="#23605f"/><rect x="1265.10" y="730.23" width="75.85" height="7.25" fill="#fdd600"/><rect x="1265.10" y="742.36" width="102.24" height="7.25" fill="#23605f"/><rect x="1265.10" y="749.61" width="217.07" height="7.25" fill="#fdd600"/><rect x="1265.10" y="761.75" width="204.92" height="7.25" fill="#23605f"/><rect x="1265.10" y="769.00" width="204.92" height="7.25" fill="#fdd600"/><rect x="1265.10" y="781.13" width="243.98" height="7.25" fill="#23605f"/><rect x="1265.10" y="788.38" width="243.98" height="7.25" fill="#fdd600"/><rect x="1184.53" y="800.52" width="80.57" height="7.25" fill="#23605f"/><rect x="1184.53" y="807.77" width="80.57" height="7.25" fill="#fdd600"/><rect x="1265.10" y="819.90" width="229.65" height="7.25" fill="#23605f"/><rect x="1265.10" y="827.15" width="229.65" height="7.25" fill="#fdd600"/><rect x="1265.10" y="839.29" width="21.67" height="7.25" fill="#23605f"/><rect x="1265.10" y="846.54" width="21.67" height="7.25" fill="#fdd600"/><rect x="1265.10" y="858.67" width="29.09" height="7.25" fill="#23605f"/><rect x="1265.10" y="865.92" width="29.09" height="7.25" fill="#fdd600"/><rect x="1265.10" y="878.06" width="20.87" height="7.25" fill="#23605f"/><rect x="1265.10" y="885.31" width="23.05" height="7.25" fill="#fdd600"/></svg><div class="t" style="left:1027px;top:625px;width:85.93px;height:15px;line-height:15px;font-size:10px;font-weight:400;color:#36332f;text-align:right;-webkit-text-stroke:0.18px #36332f;transform:translate(0.27px,0.08px) scale(0.9550,1.000);transform-origin:100% 50%;">United States USD</div><div class="t" style="left:1016px;top:644px;width:97.05px;height:15px;line-height:15px;font-size:10px;font-weight:400;color:#36332f;text-align:right;-webkit-text-stroke:0.18px #36332f;transform:translate(0.15px,0.47px) scale(0.9550,1.000);transform-origin:100% 50%;">United Kingdom GBP</div><div class="t" style="left:1045px;top:663px;width:67.60px;height:15px;line-height:15px;font-size:10px;font-weight:400;color:#36332f;text-align:right;-webkit-text-stroke:0.18px #36332f;transform:translate(0.60px,0.85px) scale(0.9550,1.000);transform-origin:100% 50%;">Argentina ARS</div><div class="t" style="left:1063px;top:683px;width:49.24px;height:15px;line-height:15px;font-size:10px;font-weight:400;color:#36332f;text-align:right;-webkit-text-stroke:0.18px #36332f;transform:translate(0.96px,0.24px) scale(0.9550,1.000);transform-origin:100% 50%;">Brazil BRL</div><div class="t" style="left:1052px;top:702px;width:60.35px;height:15px;line-height:15px;font-size:10px;font-weight:400;color:#36332f;text-align:right;-webkit-text-stroke:0.18px #36332f;transform:translate(0.85px,0.62px) scale(0.9550,1.000);transform-origin:100% 50%;">Ukraine UAH</div><div class="t" style="left:1033px;top:722px;width:79.81px;height:15px;line-height:15px;font-size:10px;font-weight:400;color:#36332f;text-align:right;-webkit-text-stroke:0.18px #36332f;transform:translate(0.39px,0.01px) scale(0.9550,1.000);transform-origin:100% 50%;">Netherlands EUR</div><div class="t" style="left:1046px;top:741px;width:67.02px;height:15px;line-height:15px;font-size:10px;font-weight:400;color:#36332f;text-align:right;-webkit-text-stroke:0.18px #36332f;transform:translate(0.18px,0.39px) scale(0.9550,1.000);transform-origin:100% 50%;">Germany EUR</div><div class="t" style="left:1061px;top:760px;width:51.47px;height:15px;line-height:15px;font-size:10px;font-weight:400;color:#36332f;text-align:right;-webkit-text-stroke:0.18px #36332f;transform:translate(0.73px,0.78px) scale(0.9550,1.000);transform-origin:100% 50%;">Spain EUR</div><div class="t" style="left:1056px;top:780px;width:57.02px;height:15px;line-height:15px;font-size:10px;font-weight:400;color:#36332f;text-align:right;-webkit-text-stroke:0.18px #36332f;transform:translate(0.18px,0.16px) scale(0.9550,1.000);transform-origin:100% 50%;">France EUR</div><div class="t" style="left:1036px;top:799px;width:77.02px;height:15px;line-height:15px;font-size:10px;font-weight:400;color:#36332f;text-align:right;-webkit-text-stroke:0.18px #36332f;transform:translate(0.18px,0.55px) scale(0.9550,1.000);transform-origin:100% 50%;">Switzerland CHF</div><div class="t" style="left:1068px;top:818px;width:44.23px;height:15px;line-height:15px;font-size:10px;font-weight:400;color:#36332f;text-align:right;-webkit-text-stroke:0.18px #36332f;transform:translate(0.97px,0.93px) scale(0.9550,1.000);transform-origin:100% 50%;">Italy EUR</div><div class="t" style="left:1050px;top:838px;width:62.96px;height:15px;line-height:15px;font-size:10px;font-weight:400;color:#36332f;text-align:right;-webkit-text-stroke:0.18px #36332f;transform:translate(0.24px,0.32px) scale(0.9550,1.000);transform-origin:100% 50%;">Thailand THB</div><div class="t" style="left:1054px;top:857px;width:58.50px;height:15px;line-height:15px;font-size:10px;font-weight:400;color:#36332f;text-align:right;-webkit-text-stroke:0.18px #36332f;transform:translate(0.70px,0.70px) scale(0.9550,1.000);transform-origin:100% 50%;">Taiwan TWD</div><div class="t" style="left:1061px;top:877px;width:52.02px;height:15px;line-height:15px;font-size:10px;font-weight:400;color:#36332f;text-align:right;-webkit-text-stroke:0.18px #36332f;transform:translate(0.18px,0.09px) scale(0.9550,1.000);transform-origin:100% 50%;">China CNY</div><div class="t" style="left:1107px;top:897px;width:25.81px;height:15px;line-height:15px;font-size:10.2px;font-weight:400;color:#36332f;text-align:center;-webkit-text-stroke:0.18px #36332f;transform:translate(0.19px,0.25px) scale(0.9600,1.000);transform-origin:50% 50%;">-20%</div><div class="t" style="left:1179px;top:897px;width:25.81px;height:15px;line-height:15px;font-size:10.2px;font-weight:400;color:#36332f;text-align:center;-webkit-text-stroke:0.18px #36332f;transform:translate(0.79px,0.25px) scale(0.9600,1.000);transform-origin:50% 50%;">-10%</div><div class="t" style="left:1256px;top:897px;width:16.74px;height:15px;line-height:15px;font-size:10.2px;font-weight:400;color:#36332f;text-align:center;-webkit-text-stroke:0.18px #36332f;transform:translate(0.93px,0.25px) scale(0.9600,1.000);transform-origin:50% 50%;">0%</div><div class="t" style="left:1326px;top:897px;width:22.42px;height:15px;line-height:15px;font-size:10.2px;font-weight:400;color:#36332f;text-align:center;-webkit-text-stroke:0.18px #36332f;transform:translate(0.69px,0.25px) scale(0.9600,1.000);transform-origin:50% 50%;">10%</div><div class="t" style="left:1399px;top:897px;width:22.42px;height:15px;line-height:15px;font-size:10.2px;font-weight:400;color:#36332f;text-align:center;-webkit-text-stroke:0.18px #36332f;transform:translate(0.29px,0.25px) scale(0.9600,1.000);transform-origin:50% 50%;">20%</div><div class="t" style="left:1471px;top:897px;width:22.42px;height:15px;line-height:15px;font-size:10.2px;font-weight:400;color:#36332f;text-align:center;-webkit-text-stroke:0.18px #36332f;transform:translate(0.89px,0.25px) scale(0.9600,1.000);transform-origin:50% 50%;">30%</div><div class="t" style="left:1544px;top:897px;width:22.42px;height:15px;line-height:15px;font-size:10.2px;font-weight:400;color:#36332f;text-align:center;-webkit-text-stroke:0.18px #36332f;transform:translate(0.49px,0.25px) scale(0.9600,1.000);transform-origin:50% 50%;">40%</div><div class="t" style="left:1617px;top:897px;width:22.42px;height:15px;line-height:15px;font-size:10.2px;font-weight:400;color:#36332f;text-align:center;-webkit-text-stroke:0.18px #36332f;transform:translate(0.09px,0.25px) scale(0.9600,1.000);transform-origin:50% 50%;">50%</div><div class="r" style="left:318px;top:921px;width:1311px;height:41px;background:#ffffff;"></div><div class="r" style="left:318px;top:920.6px;width:1311px;height:1.1999999999999318px;background:#3a3633;"></div><div class="r" style="left:636px;top:920.6px;width:147px;height:3.3999999999999773px;background:#161513;"></div><div class="t" style="left:318px;top:929px;width:79.91px;height:16px;line-height:16px;font-size:11.4px;font-weight:700;color:#706c68;text-align:left;-webkit-text-stroke:0.1px #706c68;transform:translate(0.40px,0.08px) scale(0.9318,1.000);transform-origin:0 50%;">GloBE Income</div><div class="t" style="left:414px;top:929px;width:108.84px;height:16px;line-height:16px;font-size:11.4px;font-weight:700;color:#706c68;text-align:left;-webkit-text-stroke:0.1px #706c68;transform:translate(0.30px,0.08px) scale(0.9454,1.000);transform-origin:0 50%;">Global Tax and ETR</div><div class="t" style="left:537px;top:929px;width:80.97px;height:16px;line-height:16px;font-size:11.4px;font-weight:700;color:#706c68;text-align:left;-webkit-text-stroke:0.1px #706c68;transform:translate(0.80px,0.08px) scale(0.9498,1.000);transform-origin:0 50%;">Pillar Two ETR</div><div class="t" style="left:636px;top:929px;width:154.87px;height:16px;line-height:16px;font-size:11.4px;font-weight:700;color:#161513;text-align:left;-webkit-text-stroke:0.1px #161513;transform:translate(0.00px,0.08px) scale(0.9616,1.000);transform-origin:0 50%;">Actual v Forcast Top-Up Tax</div></div></div>
</body></html>
